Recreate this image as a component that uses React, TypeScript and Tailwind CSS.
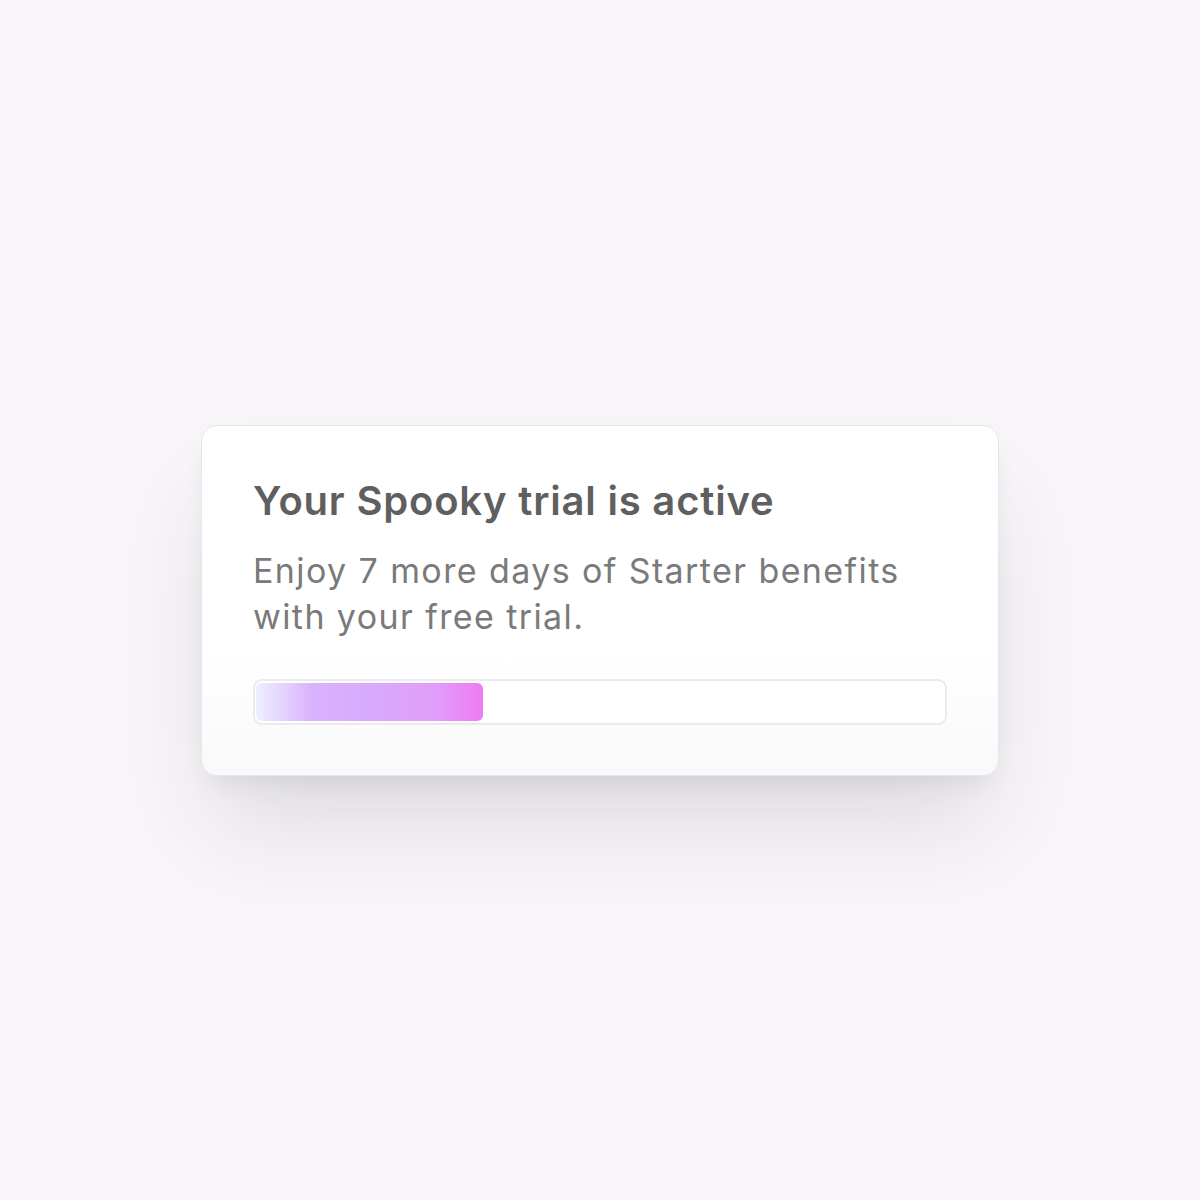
export default function App() {
  return (
    <div
      className="flex h-[1200px] w-full items-center justify-center bg-[#f7f5f8]"
      style={{ fontFamily: "Inter, 'Noto Sans', sans-serif" }}
    >
      <div className="w-[798px] rounded-[16px] border border-[#e8e6ea] bg-gradient-to-b from-white from-65% to-[#f9f9f9] px-[51px] pb-[50px] pt-[51px] shadow-[0_60px_90px_-20px_rgba(60,50,70,0.14),0_14px_24px_-10px_rgba(60,50,70,0.1)]">
        <h1 className="text-[40px] font-semibold leading-[48px] tracking-[0.8px] text-[#5f5f5f]">
          Your Spooky trial is active
        </h1>
        <p className="mt-[23px] text-[34px] leading-[46px] tracking-[1.4px] text-[#7a7a7a]">
          Enjoy 7 more days of Starter benefits
          <br />
          with your free trial.
        </p>
        <div className="mt-[39px] h-[46px] rounded-[9px] border-2 border-[#ebebeb] bg-white px-[1px] py-[2px]">
          <div className="h-full w-[227px] rounded-[6px] bg-[linear-gradient(90deg,#eef0ff_0%,#d9b2fc_25%,#d8a8fc_55%,#e29cf9_80%,#f07af2_100%)]" />
        </div>
      </div>
    </div>
  );
}
